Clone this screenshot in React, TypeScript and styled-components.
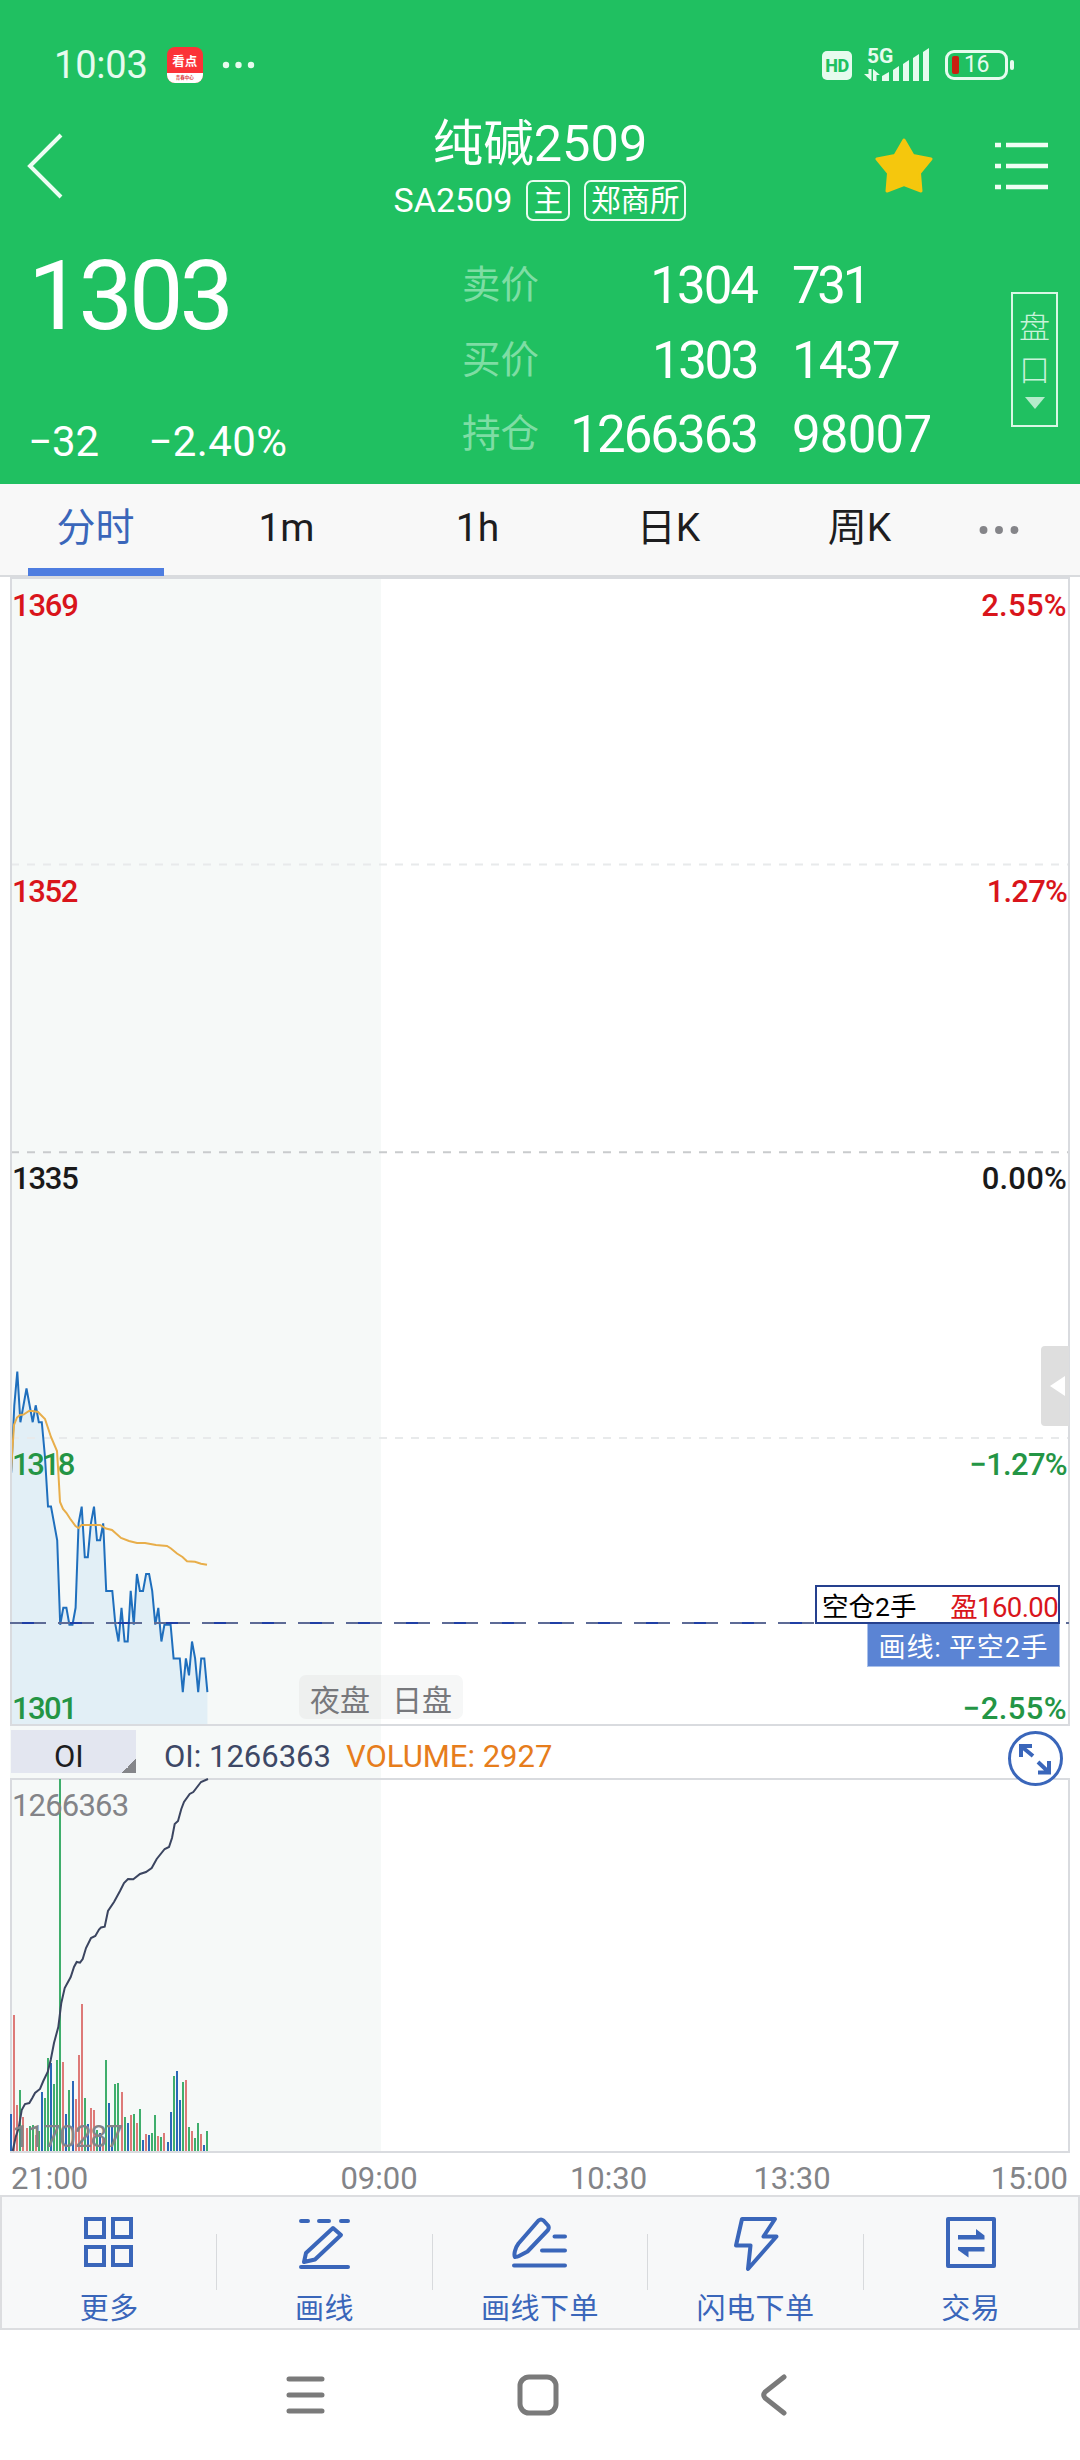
import React from "react";
import styled, { createGlobalStyle } from "styled-components";

const GlobalStyle = createGlobalStyle`
  * { box-sizing: border-box; }
  body {
    margin: 0;
    background: #fff;
    font-family: Roboto, "Noto Sans CJK SC", sans-serif;
  }
`;

const GREEN = "#20c061";
const BLUE = "#3a66ba";

const Screen = styled.div`
  width: 1080px;
  height: 2460px;
  display: flex;
  flex-direction: column;
  background: #fff;
  overflow: hidden;
`;

const Label = styled.span<{ $size: number; $ls?: number; $weight?: number; $color?: string }>`
  font-size: ${(p) => p.$size}px;
  letter-spacing: ${(p) => p.$ls ?? 0}px;
  font-weight: ${(p) => p.$weight ?? 400};
  color: ${(p) => p.$color ?? "inherit"};
  line-height: 1;
  white-space: nowrap;
`;

/* ---------- header ---------- */

const Header = styled.header`
  height: 484px;
  background: ${GREEN};
  color: #fff;
  display: flex;
  flex-direction: column;
`;

const StatusBar = styled.div`
  height: 116px;
  padding: 14px 72px 0 54px;
  display: flex;
  align-items: center;
  justify-content: space-between;
  color: #e6fbee;
`;

const StatusGroup = styled.div<{ $gap: number }>`
  display: flex;
  align-items: center;
  gap: ${(p) => p.$gap}px;
`;

const AppBadge = styled.div`
  width: 36px;
  height: 36px;
  border-radius: 8px;
  overflow: hidden;
  background: #fb3238;
  color: #fff;
  display: flex;
  flex-direction: column;
  align-items: center;
  font-weight: 700;
  font-size: 12.5px;
  line-height: 29px;
`;

const AppBadgeFoot = styled.div`
  width: 36px;
  height: 10px;
  margin-top: -3px;
  background: #fff;
  color: #d8383c;
  font-size: 4.5px;
  line-height: 9px;
  text-align: center;
`;

const HdBadge = styled.div`
  width: 30px;
  height: 29px;
  border-radius: 5px;
  background: #e6fbee;
  color: ${GREEN};
  font-size: 18px;
  letter-spacing: -0.5px;
  font-weight: 800;
  line-height: 29px;
  text-align: center;
`;

const Signal = styled.div`
  width: 66px;
  height: 34px;
  position: relative;
`;

const NetType = styled.span`
  position: absolute;
  left: 3px;
  top: -3px;
  font-size: 21px;
  font-weight: 700;
  line-height: 22px;
`;

const Battery = styled.div`
  width: 63px;
  height: 30px;
  margin-left: 3px;
  border: 3px solid #e6fbee;
  border-radius: 9px;
  padding: 0 4px;
  display: flex;
  align-items: center;
  position: relative;
  font-size: 23px;
  letter-spacing: -0.5px;
  line-height: 24px;
  &::after {
    content: "";
    position: absolute;
    right: -9px;
    top: 7px;
    width: 4px;
    height: 10px;
    border-radius: 2px;
    background: #e6fbee;
  }
`;

const BatteryLevel = styled.div`
  width: 7px;
  height: 18px;
  border-radius: 2px;
  background: #c81e10;
  margin-right: 5px;
`;

const TitleBar = styled.div`
  height: 112px;
  display: grid;
  grid-template-columns: 340px 1fr 340px;
`;

const TitleSide = styled.div<{ $end?: boolean }>`
  height: 100px;
  display: flex;
  align-items: center;
  justify-content: ${(p) => (p.$end ? "flex-end" : "flex-start")};
  padding: 0 32px 0 27px;
  gap: 62px;
`;

const TitleBlock = styled.div`
  display: flex;
  flex-direction: column;
  align-items: center;
`;

const TitleLine = styled.div`
  height: 56px;
  display: flex;
  align-items: center;
  gap: 14px;
`;

const Chip = styled.span`
  height: 41px;
  padding: 0 5px;
  border: 2px solid #e9fcf0;
  border-radius: 7px;
  font-size: 29.5px;
  line-height: 39px;
  white-space: nowrap;
`;

const Quote = styled.div`
  height: 256px;
  display: flex;
`;

const PriceColumn = styled.div`
  width: 462px;
  padding-left: 28px;
  display: flex;
  flex-direction: column;
  justify-content: space-between;
`;

const LastPrice = styled.div`
  height: 133px;
  padding-top: 3px;
  display: flex;
  align-items: center;
`;

const Change = styled.div`
  height: 84px;
  display: flex;
  align-items: center;
  gap: 49px;
`;

const Depth = styled.div`
  padding-top: 20px;
  width: 549px;
`;

const DepthRow = styled.div`
  height: 74.7px;
  display: grid;
  grid-template-columns: 80px 215px 1fr;
  align-items: center;
  & > :nth-child(2) {
    justify-self: end;
  }
  & > :nth-child(3) {
    padding-left: 35px;
  }
`;

const BoardButton = styled.div`
  width: 47px;
  height: 135px;
  margin-top: 64px;
  border: 2px solid #d9f7e5;
  padding-top: 12px;
  display: flex;
  flex-direction: column;
  align-items: center;
  font-size: 31px;
  font-weight: 300;
  line-height: 43px;
  color: #c9f3da;
`;

const BoardArrow = styled.svg`
  display: block;
  margin-top: 5px;
`;

/* ---------- tabs ---------- */

const Tabs = styled.nav`
  height: 93px;
  border-bottom: 2px solid #d9dbde;
  background: #f8f8f8;
  display: flex;
`;

const Tab = styled.div<{ $active?: boolean; $width?: number }>`
  width: ${(p) => p.$width ?? 191}px;
  display: flex;
  flex-direction: column;
  align-items: center;
  font-size: 39px;
  line-height: 89px;
  height: 92px;
  color: ${(p) => (p.$active ? BLUE : "#1d1d1f")};
`;

const TabUnderline = styled.div`
  width: 136px;
  height: 8px;
  margin-top: -5px;
  background: #4e7de0;
`;

/* ---------- charts ---------- */

const ChartArea = styled.main`
  margin: 0 10px;
  background: linear-gradient(to right, #f6f9f8 371px, #fff 371px);
`;

const Pane = styled.section<{ $height: number }>`
  position: relative;
  height: ${(p) => p.$height}px;
  display: flex;
  flex-direction: column;
`;

const Plot = styled.svg`
  position: absolute;
  inset: 0;
  display: block;
`;

const Band = styled.div<{ $grow?: boolean }>`
  position: relative;
  height: 286.4px;
  ${(p) => p.$grow && "height: auto; flex: 1;"}
  display: flex;
  flex-direction: column;
  justify-content: space-between;
`;

const AxisRow = styled.div<{ $height?: number }>`
  height: ${(p) => p.$height ?? 57}px;
  padding: 0 3px 0 2px;
  display: flex;
  align-items: center;
  justify-content: space-between;
`;

const SessionTags = styled.div`
  position: absolute;
  left: 289px;
  top: 1098px;
  display: flex;
  border-radius: 7px;
  overflow: hidden;
`;

const SessionTag = styled.div<{ $bg: string }>`
  width: 82px;
  height: 44px;
  padding-top: 1px;
  background: ${(p) => p.$bg};
  color: #77787c;
  font-size: 30px;
  line-height: 49px;
  text-align: center;
`;

const PositionBox = styled.div`
  position: absolute;
  left: 805px;
  top: 1008px;
  width: 245px;
  height: 39px;
  border: 2px solid #25408e;
  background: #fff;
  padding: 6px 0 0 5px;
  display: flex;
  align-items: center;
  justify-content: space-between;
`;

const OrderTag = styled.div`
  position: absolute;
  left: 857px;
  top: 1047px;
  width: 193px;
  height: 43px;
  background: #5b84d4;
  border: 1px solid #a9c0ea;
  border-top: 0;
  padding-top: 7px;
  display: flex;
  align-items: center;
  justify-content: center;
  color: #fff;
`;

const DrawerHandle = styled.div`
  position: absolute;
  right: 1px;
  top: 769px;
  width: 28px;
  height: 80px;
  border-radius: 4px 0 0 4px;
  background: #dedede;
  display: flex;
  align-items: center;
  justify-content: center;
  padding-left: 4px;
`;

const IndicatorRow = styled.div`
  position: relative;
  z-index: 1;
  height: 52px;
  padding: 4px 7px 0 1px;
  display: flex;
  align-items: flex-start;
`;

const IndicatorSelect = styled.div`
  width: 125px;
  height: 43px;
  background: linear-gradient(135deg, transparent 50%, #85868a 50%) right bottom / 14px 14px no-repeat, #e3e6f0;
  color: #1d1d1f;
  display: flex;
  align-items: center;
  padding: 9px 0 0 43px;
`;

const IndicatorText = styled.div`
  height: 43px;
  flex: 1;
  padding: 9px 0 0 28px;
  display: flex;
  align-items: center;
  gap: 15px;
`;

const ExpandIcon = styled.svg`
  display: block;
  margin-top: 1px;
`;

const TimeAxis = styled.div`
  height: 42px;
  padding: 8px 12px 0 11px;
  display: grid;
  grid-template-columns: 268px 200px 259px 108px 222px;
  align-items: center;
  justify-items: center;
  & > :first-child {
    justify-self: start;
  }
  & > :last-child {
    justify-self: end;
  }
`;

/* ---------- bottom ---------- */

const Toolbar = styled.footer`
  height: 135px;
  border: 2px solid #dcdde0;
  background: #f7f8f9;
  display: flex;
`;

const Tool = styled.div`
  flex: 1;
  display: flex;
  flex-direction: column;
  align-items: center;
  padding-top: 18px;
  gap: 26px;
  color: ${BLUE};
  & > svg {
    overflow: visible;
  }
`;

const ToolDivider = styled.div`
  width: 1px;
  height: 56px;
  margin-top: 37px;
  background: #d8dadd;
`;

const SystemNav = styled.div`
  height: 130px;
  display: flex;
  align-items: center;
  justify-content: center;
  gap: 191px;
  padding-right: 2px;
`;

/* ---------- data ---------- */

const PITCH = 3.065;
const xAt = (i: number) => 11.2 + i * PITCH;
const yAt = (price: number) => 1152.3 + (1335 - price) * 16.87;

const prices = [
  1316, 1320, 1322, 1319, 1320, 1321, 1320, 1319, 1320, 1319, 1319, 1317, 1314, 1314, 1313, 1312, 1307, 1308, 1308,
  1307, 1307, 1308, 1313, 1314, 1311, 1311, 1313, 1314, 1312, 1312, 1313, 1309, 1309, 1309, 1307, 1306, 1308, 1306,
  1306, 1309, 1307, 1310, 1309, 1309, 1310, 1310, 1309, 1307, 1308, 1306, 1307, 1307, 1307, 1305, 1305, 1305, 1303,
  1305, 1304, 1306, 1305, 1303, 1305, 1305, 1303,
];

const average: [number, number][] = [
  [11, 1472], [14, 1425], [17, 1417.5], [20, 1415], [23.5, 1414.5], [29, 1411], [32.5, 1411], [38, 1412], [45, 1419],
  [51, 1437], [57, 1451], [58.5, 1475], [60, 1502], [63, 1509], [66.5, 1513], [70, 1518.5], [75.5, 1526], [78.5, 1528],
  [81.5, 1525], [100, 1525], [106, 1528.5], [112, 1530], [121, 1538], [129, 1541], [137, 1543], [145, 1543],
  [156, 1545], [167, 1546], [171, 1548.5], [177, 1553.5], [182.5, 1557], [187, 1561.3], [195, 1561.7], [201, 1563.7],
  [207, 1564.7],
];

/* one bar a minute: side (b, r, g) and height in pixels */
const volumes: [string, number][] = [
  ["b", 37], ["r", 136], ["r", 46], ["g", 61], ["r", 34], ["r", 23], ["g", 25], ["g", 26], ["r", 16], ["g", 20],
  ["b", 59], ["g", 53], ["g", 93], ["b", 88], ["g", 67], ["g", 91], ["g", 372], ["r", 89], ["b", 37], ["g", 61],
  ["b", 70], ["r", 52], ["r", 96], ["r", 147], ["g", 53], ["b", 27], ["r", 43], ["r", 41], ["g", 21], ["b", 18],
  ["r", 14], ["g", 91], ["b", 48], ["b", 25], ["g", 67], ["g", 68], ["r", 59], ["g", 34], ["b", 28], ["r", 36],
  ["g", 37], ["r", 28], ["g", 42], ["b", 11], ["r", 17], ["b", 16], ["g", 18], ["g", 36], ["r", 15], ["g", 14],
  ["r", 18], ["b", 9], ["b", 39], ["g", 75], ["b", 80], ["b", 51], ["g", 69], ["r", 71], ["g", 24], ["r", 20],
  ["g", 13], ["g", 28], ["r", 17], ["b", 6], ["g", 20],
];

const volumeColors: Record<string, string> = { b: "#2a68b8", r: "#dd7a78", g: "#3fae6c" };

const openInterest: [number, number][] = [
  [12.7, 2151], [15.7, 2137], [18.7, 2128], [21.7, 2110], [25, 2104], [29.3, 2103], [32.3, 2098], [35, 2093],
  [40, 2089], [43.3, 2081], [47.7, 2072], [50.7, 2060], [54, 2043], [58.3, 2027], [61.3, 2003], [64.7, 1988],
  [70.7, 1977], [74, 1967], [76.7, 1962], [80, 1962.7], [82.7, 1959], [86, 1948], [91, 1938], [95.3, 1936],
  [99, 1929.5], [101, 1927.5], [104.7, 1926.7], [108, 1911], [114, 1902], [120, 1891], [124, 1883], [128, 1879],
  [133.3, 1879.3], [140, 1874], [146, 1872], [151.7, 1868], [156.7, 1859], [164.7, 1849], [169, 1847], [172, 1838],
  [174.7, 1824], [178, 1821], [181.3, 1809], [184, 1802], [189.7, 1794], [193.3, 1792], [201, 1782], [208, 1779],
];

const toPath = (pts: [number, number][]) => "M" + pts.map(([x, y]) => `${x.toFixed(1)} ${y.toFixed(1)}`).join("L");
const priceLine = toPath(prices.map((p, i) => [xAt(i), yAt(p)]));

const depth = [
  { name: "卖价", price: "1304", volume: "731", pls: -2, vls: -3.3 },
  { name: "买价", price: "1303", volume: "1437", pls: -2.4, vls: -2 },
  { name: "持仓", price: "1266363", volume: "98007", pls: -2, vls: -0.8 },
];

const RED_TEXT = "#d9151b";
const GREEN_TEXT = "#249545";

/* ---------- icons ---------- */

const stroke = { fill: "none", stroke: BLUE, strokeWidth: 4, strokeLinecap: "round", strokeLinejoin: "round" } as const;

const MoreIcon = () => (
  <svg width="54" height="54" viewBox="0 0 54 54" {...stroke} strokeLinejoin="miter">
    <path d="M4 4h18v18H4zM31 4h18v18H31zM4 32h18v18H4zM31 32h18v18H31z" />
  </svg>
);

const DrawIcon = () => (
  <svg width="54" height="54" viewBox="0 0 54 54" {...stroke}>
    <path d="M3 6h7M21 6h10M43 6h7M3 52h47M6 47L8 38 35 13 43 20 17 44.500z" />
  </svg>
);

const DrawOrderIcon = () => (
  <svg width="58" height="54" viewBox="0 0 58 54" {...stroke}>
    <path d="M3 50.500h51M31 35.500h23M43.500 21.500h10.500M4 42c-1.500-2 0-9 3.500-13.500L27.500 5.500Q30 3.500 32.500 5.500L37 10.500Q38.500 12.500 37 15L16.500 36.500 8 41Q4.500 42.500 4 41" />
  </svg>
);

const FlashIcon = () => (
  <svg width="54" height="54" viewBox="0 0 54 54" {...stroke}>
    <path d="M14 4h33L35.500 21.500H48.500L20 54 22.500 30.500H8z" />
  </svg>
);

const TradeIcon = () => (
  <svg width="54" height="54" viewBox="0 0 54 54" {...stroke}>
    <path d="M4 4h46v47H4z" />
    <path d="M14 24.500h26.500v-4L32 14v6H14zM14 32h26.500v4.500H24.500v6L14 35z" fill={BLUE} stroke="none" />
  </svg>
);

const tools = [
  { name: "更多", icon: <MoreIcon /> },
  { name: "画线", icon: <DrawIcon /> },
  { name: "画线下单", icon: <DrawOrderIcon /> },
  { name: "闪电下单", icon: <FlashIcon /> },
  { name: "交易", icon: <TradeIcon /> },
];

/* ---------- screen ---------- */

const TopHeader = () => (
  <Header>
    <StatusBar>
      <StatusGroup $gap={19}>
        <Label $size={38} $ls={-0.2}>10:03</Label>
        <AppBadge>
          看点
          <AppBadgeFoot>青春中心</AppBadgeFoot>
        </AppBadge>
        <svg width="34" height="8" viewBox="0 0 34 8" fill="#e6fbee">
          <circle cx="4" cy="4" r="3.200" />
          <circle cx="16.500" cy="4" r="3.200" />
          <circle cx="29" cy="4" r="3.200" />
        </svg>
      </StatusGroup>
      <StatusGroup $gap={12}>
        <HdBadge>HD</HdBadge>
        <Signal>
          <NetType>5G</NetType>
          <svg width="66" height="34" viewBox="0 0 66 34" fill="#e6fbee">
            <path d="M4.500 21h3v12L0 26h4.500zM9 21l7 6h-3.500v6H9z" />
            <path d="M18 28l7-4v9h-7zM29 22l6-4v15h-6zM39 16l6-4v21h-6zM49 10l6-4v27h-6zM59 4l6-4v33h-6z" />
          </svg>
        </Signal>
        <Battery>
          <BatteryLevel />
          16
        </Battery>
      </StatusGroup>
    </StatusBar>
    <TitleBar>
      <TitleSide>
        <svg width="36" height="66" viewBox="0 0 36 66" fill="none" stroke="#eefdf4" strokeWidth="4">
          <path d="M34 2L3 33l31 31" />
        </svg>
      </TitleSide>
      <TitleBlock>
        <TitleLine>
          <Label $size={50.5}>纯碱2509</Label>
        </TitleLine>
        <TitleLine>
          <Label $size={34}>SA2509</Label>
          <Chip>主</Chip>
          <Chip>郑商所</Chip>
        </TitleLine>
      </TitleBlock>
      <TitleSide $end>
        <svg width="58" height="56" viewBox="0 0 58 56">
          <path
            d="M29 2L38 17.500 56 21 44.500 35 46 53 29 46.500 12 53 13.500 35 2 21 20 17.500z"
            fill="#f5c70d"
            stroke="#f5c70d"
            strokeWidth="3"
            strokeLinejoin="round"
          />
        </svg>
        <svg width="53" height="48" viewBox="0 0 53 48" stroke="#eefdf4" strokeWidth="4.500">
          <path d="M0 3h6M11 3h42M0 24h6M11 24h42M0 45h6M11 45h42" />
        </svg>
      </TitleSide>
    </TitleBar>
    <Quote>
      <PriceColumn>
        <LastPrice>
          <Label $size={97} $ls={-4}>1303</Label>
        </LastPrice>
        <Change>
          <Label $size={42}>−32</Label>
          <Label $size={42} $ls={0.4}>−2.40%</Label>
        </Change>
      </PriceColumn>
      <Depth>
        {depth.map((row) => (
          <DepthRow key={row.name}>
            <Label $size={38.5} $color="#7edda4">{row.name}</Label>
            <Label $size={51} $ls={row.pls}>{row.price}</Label>
            <Label $size={51} $ls={row.vls}>{row.volume}</Label>
          </DepthRow>
        ))}
      </Depth>
      <BoardButton>
        <span>盘</span>
        <span>口</span>
        <BoardArrow width="20" height="12" viewBox="0 0 20 12">
          <path d="M0 0h20L10 12z" fill="#b4eccb" />
        </BoardArrow>
      </BoardButton>
    </Quote>
  </Header>
);

const PricePane = () => (
  <Pane $height={1149}>
    <Plot width="1060" height="1149" viewBox="10 577 1060 1149">
      <path d={`${priceLine}V1725H11z`} fill="#e2eff6" />
      <path d="M11 864.500H1069M11 1438H1069" stroke="#e8eaeb" strokeWidth="2" strokeDasharray="8 8" />
      <path d="M11 1152.300H1069" stroke="#c9cbcd" strokeWidth="2" strokeDasharray="8 8" />
      <path d={priceLine} fill="none" stroke="#1f6fbd" strokeWidth="2" />
      <path d={toPath(average)} fill="none" stroke="#e8ae4a" strokeWidth="2" />
      <rect x="11" y="578" width="1058" height="1147" fill="none" stroke="#d9dbdf" strokeWidth="2" />
      <path d="M10 1623H1069" stroke="#5d6b96" strokeWidth="2" strokeDasharray="36 12" />
      <path d="M22 1623H1050" stroke="#1f3fa6" strokeWidth="2" strokeDasharray="12 36" />
    </Plot>
    <Band>
      <AxisRow>
        <Label $size={31} $weight={500} $color={RED_TEXT} $ls={-1.2}>1369</Label>
        <Label $size={31} $weight={500} $color={RED_TEXT} $ls={0.3}>2.55%</Label>
      </AxisRow>
    </Band>
    <Band>
      <AxisRow>
        <Label $size={31} $weight={500} $color={RED_TEXT} $ls={-1.4}>1352</Label>
        <Label $size={31} $weight={500} $color={RED_TEXT} $ls={-0.8}>1.27%</Label>
      </AxisRow>
    </Band>
    <Band>
      <AxisRow>
        <Label $size={31} $weight={500} $color="#1a1a1a" $ls={-1.2}>1335</Label>
        <Label $size={31} $weight={500} $color="#1a1a1a" $ls={0.2}>0.00%</Label>
      </AxisRow>
    </Band>
    <Band $grow>
      <AxisRow>
        <Label $size={31} $weight={500} $color={GREEN_TEXT} $ls={-2.4}>1318</Label>
        <Label $size={31} $weight={500} $color={GREEN_TEXT} $ls={-0.7}>−1.27%</Label>
      </AxisRow>
      <AxisRow $height={36}>
        <Label $size={31} $weight={500} $color={GREEN_TEXT} $ls={-1.6}>1301</Label>
        <Label $size={31} $weight={500} $color={GREEN_TEXT} $ls={0.4}>−2.55%</Label>
      </AxisRow>
    </Band>
    <SessionTags>
      <SessionTag $bg="#eef0ef">夜盘</SessionTag>
      <SessionTag $bg="#f6f7f7">日盘</SessionTag>
    </SessionTags>
    <PositionBox>
      <Label $size={26.5}>空仓2手</Label>
      <Label $size={27.5} $ls={-0.6} $color={RED_TEXT}>盈160.00</Label>
    </PositionBox>
    <OrderTag>
      <Label $size={27} $ls={0.8}>画线: 平空2手</Label>
    </OrderTag>
    <DrawerHandle>
      <svg width="15" height="20" viewBox="0 0 15 20">
        <path d="M15 0v20L0 10z" fill="#fff" />
      </svg>
    </DrawerHandle>
  </Pane>
);

const Indicator = () => (
  <IndicatorRow>
    <IndicatorSelect>
      <Label $size={31}>OI</Label>
    </IndicatorSelect>
    <IndicatorText>
      <Label $size={31} $color="#3d4866">OI: 1266363</Label>
      <Label $size={31} $color="#e67d1c">VOLUME: 2927</Label>
    </IndicatorText>
    <ExpandIcon width="56" height="56" viewBox="0 0 56 56" fill="none" stroke={BLUE} strokeWidth="3">
      <circle cx="28.500" cy="27.500" r="26" fill="#fff" />
      <path d="M26 25L14.500 15.500M14 26V15h11M31 31L41 40.500M42 30v11.500H31" strokeWidth="4" />
    </ExpandIcon>
  </IndicatorRow>
);

const InterestPane = () => (
  <Pane $height={375}>
    <Plot width="1060" height="375" viewBox="10 1778 1060 375">
      <rect x="11" y="1779" width="1058" height="373" fill="none" stroke="#d9dbdf" strokeWidth="2" />
      {volumes.map(([side, h], i) => (
        <rect key={i} x={Math.round(xAt(i) - 1)} y={2151 - h} width="2" height={h} fill={volumeColors[side]} />
      ))}
      <path d={toPath(openInterest)} fill="none" stroke="#3b4560" strokeWidth="2" />
    </Plot>
    <Band $grow>
      <AxisRow $height={54}>
        <Label $size={31} $color="#838488" $ls={-0.8}>1266363</Label>
      </AxisRow>
      <AxisRow $height={34}>
        <Label $size={31} $color="#838488" $ls={-1.8}>1170287</Label>
      </AxisRow>
    </Band>
  </Pane>
);

export default function App() {
  return (
    <Screen>
      <GlobalStyle />
      <TopHeader />
      <Tabs>
        <Tab $active>
          分时
          <TabUnderline />
        </Tab>
        <Tab>1m</Tab>
        <Tab>1h</Tab>
        <Tab>日K</Tab>
        <Tab>周K</Tab>
        <Tab $width={88}>
          <svg width="42" height="98" viewBox="0 0 42 98" fill="#858589">
            <circle cx="4.500" cy="49" r="4.200" />
            <circle cx="21" cy="49" r="4.200" />
            <circle cx="37.500" cy="49" r="4.200" />
          </svg>
        </Tab>
      </Tabs>
      <ChartArea>
        <PricePane />
        <Indicator />
        <InterestPane />
      </ChartArea>
      <TimeAxis>
        {["21:00", "09:00", "10:30", "13:30", "15:00"].map((t) => (
          <Label key={t} $size={31} $color="#838488">{t}</Label>
        ))}
      </TimeAxis>
      <Toolbar>
        {tools.map((tool, i) => (
          <React.Fragment key={tool.name}>
            {i > 0 && <ToolDivider />}
            <Tool>
              {tool.icon}
              <Label $size={29} $ls={0.5}>{tool.name}</Label>
            </Tool>
          </React.Fragment>
        ))}
      </Toolbar>
      <SystemNav>
        <svg width="40" height="40" viewBox="0 0 40 40" stroke="#7a7a7a" strokeWidth="5" strokeLinecap="round">
          <path d="M3 4h33M3 20h33M3 36h33" />
        </svg>
        <svg width="42" height="42" viewBox="0 0 42 42" fill="none" stroke="#7a7a7a" strokeWidth="5">
          <rect x="3" y="3" width="36" height="36" rx="9" />
        </svg>
        <svg width="42" height="42" viewBox="0 0 42 42" fill="none" stroke="#7a7a7a" strokeWidth="5" strokeLinecap="round">
          <path d="M34 3L15 18q-2.500 3 0 6l19 15" />
        </svg>
      </SystemNav>
    </Screen>
  );
}
